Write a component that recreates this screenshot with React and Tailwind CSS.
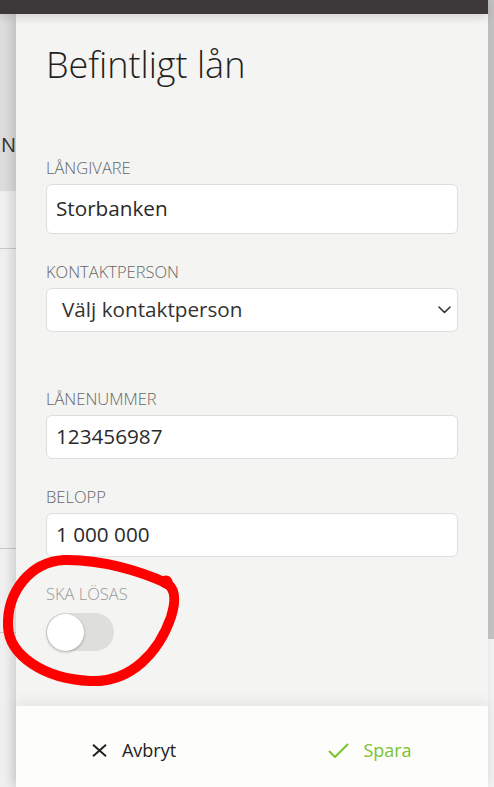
import { useState } from "react";

const FONT = { fontFamily: '"Open Sans", "Noto Sans", sans-serif' };

function Label({ children, muted }) {
  return (
    <div className={`h-[20px] text-[16.5px] font-light uppercase leading-[20px] ${muted ? "text-[#999]" : "text-[#666]"}`}>
      {children}
    </div>
  );
}

function Field({ label, value, first }) {
  return (
    <div>
      <Label>{label}</Label>
      <div
        className={`mt-[6px] flex items-center rounded-[6px] border border-[#dedede] bg-white pl-[9px] text-[20.7px] text-[#2a2a2a] ${
          first ? "h-[50px]" : "h-[44px]"
        }`}
      >
        {value}
      </div>
    </div>
  );
}

function Chevron() {
  return (
    <svg width="13" height="8" viewBox="0 0 13 8" fill="none">
      <path d="M1 1l5.5 5.5L12 1" stroke="#333" strokeWidth="1.6" strokeLinecap="round" strokeLinejoin="round" />
    </svg>
  );
}

function Toggle({ on, onChange }) {
  return (
    <button
      type="button"
      onClick={() => onChange(!on)}
      className={`mt-[9px] flex h-[38px] w-[68px] items-center rounded-full ${on ? "bg-[#7cc22f]" : "bg-[#dededc]"}`}
    >
      <span
        className={`block h-[37px] w-[37px] rounded-full bg-white shadow-[0_1px_3px_rgba(0,0,0,0.3)] ${
          on ? "translate-x-[31px]" : "translate-x-[1px]"
        }`}
      />
    </button>
  );
}

function Annotation() {
  return (
    <svg className="pointer-events-none absolute left-0 top-0 z-30" width="494" height="787" viewBox="0 0 494 787" fill="none">
      <path
        d="M166 583 C140 571 100 559 64 560 C30 562 7 592 8 626 C9 656 45 679 90 681 C131 683 159 652 171 617 C177 598 174 587 166 583"
        stroke="#ff0000"
        strokeWidth="10"
        strokeLinecap="round"
      />
      <circle cx="166" cy="582" r="6.5" fill="#ff0000" />
    </svg>
  );
}

export default function App() {
  const [losas, setLosas] = useState(false);

  return (
    <div className="relative flex h-[787px] w-[494px] overflow-hidden bg-[#f0f0f0]" style={FONT}>
      <div className="flex w-[488px] flex-col">
        <div className="relative z-20 h-[14px] shrink-0 bg-[#3d3839] shadow-[0_3px_10px_rgba(0,0,0,0.14)]" />
        <div className="flex min-h-0 flex-1">
          {/* page behind the drawer */}
          <div className="flex w-[16px] shrink-0 flex-col overflow-hidden">
            <div className="h-[177px] bg-[#dcdcdc] pt-[119px]">
              <div className="whitespace-nowrap pl-[1px] text-[20px] leading-[24px] text-[#333]">NG</div>
            </div>
            <div className="h-[58px] border-b border-[#c9c9c9] bg-[#efefef]" />
            <div className="h-[300px] border-b border-[#c9c9c9] bg-[#efefef]" />
            <div className="h-[84px] border-b border-[#c9c9c9] bg-[#efefef]" />
            <div className="flex-1 bg-[#efefef]" />
          </div>

          {/* drawer */}
          <div className="relative z-10 flex flex-1 flex-col bg-[#f4f4f2] shadow-[-4px_0_9px_rgba(0,0,0,0.13)]">
            <div className="flex-1 px-[30px] pt-[30px]">
              <h1 className="h-[42px] text-[36px] font-light leading-[42px] text-[#1f1f1f]">Befintligt lån</h1>

              <div className="mt-[72px]">
                <Field label="Långivare" value="Storbanken" first />
              </div>

              <div className="mt-[28px]">
                <Label>Kontaktperson</Label>
                <div className="mt-[6px] flex h-[44px] items-center justify-between rounded-[6px] border border-[#dedede] bg-white pl-[15px] pr-[6px] text-[20.7px] text-[#333]">
                  <span>Välj kontaktperson</span>
                  <Chevron />
                </div>
              </div>

              <div className="mt-[57px]">
                <Field label="Lånenummer" value="123456987" />
              </div>

              <div className="mt-[28px]">
                <Field label="Belopp" value="1 000 000" />
              </div>

              <div className="mt-[27px]">
                <Label muted>Ska lösas</Label>
                <Toggle on={losas} onChange={setLosas} />
              </div>
            </div>

            <div className="relative grid h-[81px] shrink-0 grid-cols-2 bg-[#fdfdfb] pt-[32px] shadow-[0_-5px_12px_rgba(0,0,0,0.06)]">
              <button type="button" className="flex h-[24px] items-center justify-center gap-[15px] text-[18px] text-[#222]">
                <svg width="15" height="13" viewBox="0 0 15 13" fill="none">
                  <path d="M1 0.8L14 12.2M14 0.8L1 12.2" stroke="#222" strokeWidth="2" />
                </svg>
                <span>Avbryt</span>
              </button>
              <button type="button" className="flex h-[24px] items-center justify-center gap-[14px] text-[18px] text-[#7cc22f]">
                <svg width="21" height="15" viewBox="0 0 21 15" fill="none">
                  <path d="M1 8l6 6L20 1" stroke="#7cc22f" strokeWidth="2" />
                </svg>
                <span>Spara</span>
              </button>
            </div>
          </div>
        </div>
      </div>

      {/* scrollbar */}
      <div className="flex w-[6px] flex-col">
        <div className="h-[639px] bg-[#c1c1c1]" />
        <div className="flex-1 bg-[#f1f1f1]" />
      </div>

      <Annotation />
    </div>
  );
}
